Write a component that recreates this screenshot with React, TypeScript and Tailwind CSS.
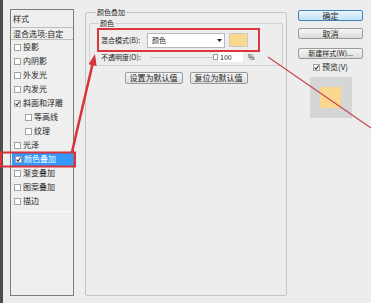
const styleItems = [
  { name: "投影" },
  { name: "内阴影" },
  { name: "外发光" },
  { name: "内发光" },
  { name: "斜面和浮雕", checked: true },
  { name: "等高线", sub: true },
  { name: "纹理", sub: true },
  { name: "光泽" },
  { name: "颜色叠加", checked: true, active: true },
  { name: "渐变叠加" },
  { name: "图案叠加" },
  { name: "描边" },
];

function CheckBox({ checked }: { checked?: boolean }) {
  return (
    <span className="w-[7px] h-[7px] shrink-0 border border-[#a3a3a3] bg-white flex items-center justify-center">
      {checked && (
        <svg width="5" height="5" viewBox="0 0 5 5">
          <path d="M0.5 2.6 L2 4.2 L4.6 0.6" stroke="#333" strokeWidth="1.1" fill="none" />
        </svg>
      )}
    </span>
  );
}

function GrayButton({ label, className = "" }: { label: string; className?: string }) {
  return (
    <div
      className={`h-[11px] flex items-center justify-center whitespace-nowrap border border-[#9a9a9a] rounded-[2px] bg-linear-to-b from-[#f6f6f6] to-[#dcdcdc] leading-none ${className}`}
    >
      {label}
    </div>
  );
}

function LeftPanel() {
  return (
    <div className="ml-[7px] mt-[9px] w-[64px] h-[287px] border border-[#7c7c7c] bg-[#efefef] flex flex-col text-[8px] leading-none">
      <div className="h-[18px] border-b border-[#bdbdbd] flex items-center pl-[2px]">样式</div>
      <div className="h-[12px] border-b border-[#bdbdbd] flex items-center pl-[2px]">混合选项:自定</div>
      {styleItems.map((item) => (
        <div
          key={item.name}
          className={`h-[14px] flex items-center gap-[2px] ${item.sub ? "pl-[14px]" : "pl-[3px]"} ${
            item.active ? "ml-[1px] pl-[2px] bg-[#3399ff] text-white" : ""
          }`}
        >
          <CheckBox checked={item.checked} />
          <span>{item.name}</span>
        </div>
      ))}
      <div className="mt-[3px] mx-[1px] h-px bg-[#f9f9f9]" />
    </div>
  );
}

function MiddlePanel() {
  return (
    <div className="ml-[11px] mt-[6px] w-[202px] h-[290px]">
      <fieldset className="w-full h-full border border-[#c4c4c4] rounded-[2px] flex flex-col text-[7px] leading-none">
        <legend className="ml-[10px] px-[1px] text-[7px] leading-[12px]">颜色叠加</legend>

        <fieldset className="mx-[3px] border border-[#d2d2d2] rounded-[2px] pb-[3px] flex flex-col">
          <legend className="ml-[9px] px-[1px] text-[7px] leading-[10px]">颜色</legend>

          {/* blend mode row, outlined in red */}
          <div className="ml-[7px] w-[163px] h-[24px] border-2 border-[#d9363e] flex items-center pl-[2px]">
            <span className="w-[46px] shrink-0 whitespace-nowrap">混合模式(B):</span>
            <div className="w-[78px] h-[15px] bg-white border border-[#b8b8b8] flex items-center justify-between pl-[4px] pr-[2px]">
              <span>颜色</span>
              <svg width="5" height="3" viewBox="0 0 5 3">
                <path d="M0 0 H5 L2.5 3 Z" fill="#222" />
              </svg>
            </div>
            <div className="ml-[4px] w-[19px] h-[14px] bg-[#fbd88f] border border-[#c9c9c9]" />
          </div>

          <div className="ml-[11px] h-[10px] flex items-center">
            <span className="w-[49px] shrink-0 whitespace-nowrap">不透明度(O):</span>
            <div className="w-[63px] h-px bg-[#cfcfcf]" />
            <div className="w-[5px] h-[6px] bg-white border border-[#9c9c9c]" />
            <div className="w-[25px] h-[10px] bg-white flex items-center pl-[2px]">100</div>
            <span className="ml-[5px]">%</span>
          </div>
        </fieldset>

        <div className="mt-[6px] flex justify-center gap-[7px] text-[8px]">
          <GrayButton label="设置为默认值" className="w-[58px] h-[12px]" />
          <GrayButton label="复位为默认值" className="w-[58px] h-[12px]" />
        </div>
      </fieldset>
    </div>
  );
}

function RightColumn() {
  return (
    <div className="ml-[11px] w-[65px] flex flex-col text-[8px] leading-none">
      <div className="mt-[10px] h-[11px] flex items-center justify-center border border-[#3c84bd] rounded-[2px] bg-linear-to-b from-[#eaf6fd] to-[#c2e3f5]">
        确定
      </div>
      <GrayButton label="取消" className="mt-[7px]" />
      <GrayButton label="新建样式(W)..." className="mt-[9px] text-[7px]" />
      <div className="mt-[4px] h-[8px] flex items-center justify-center gap-[2px]">
        <CheckBox checked />
        <span>预览(V)</span>
      </div>
      <div className="mt-[6px] self-center w-[42px] h-[41px] bg-[#d6d6d6] flex items-center justify-center">
        <div className="w-[21px] h-[21px] bg-[#fbd88f]" />
      </div>
    </div>
  );
}

export default function App() {
  return (
    <div className="relative w-[371px] h-[303px] overflow-hidden bg-[#ededed] text-[#1e1e1e] font-['Noto_Sans_CJK_SC','Liberation_Sans',sans-serif] flex">
      <div className="w-[3px] h-full bg-[#4c4c4c] shrink-0" />
      <LeftPanel />
      <MiddlePanel />
      <RightColumn />

      {/* red annotations drawn over the dialog */}
      <svg className="absolute inset-0 pointer-events-none" width="371" height="303" viewBox="0 0 371 303">
        <rect x="1" y="152.5" width="74" height="14" fill="none" stroke="#d8323a" strokeWidth="2" />
        <line x1="72" y1="152" x2="92.8" y2="63" stroke="#d8323a" strokeWidth="2.5" />
        <polygon points="95,54 88.6,64.2 96.6,66" fill="#d8323a" />
        <line x1="268" y1="57" x2="371" y2="128" stroke="#c8464e" strokeWidth="1.2" />
      </svg>
    </div>
  );
}
